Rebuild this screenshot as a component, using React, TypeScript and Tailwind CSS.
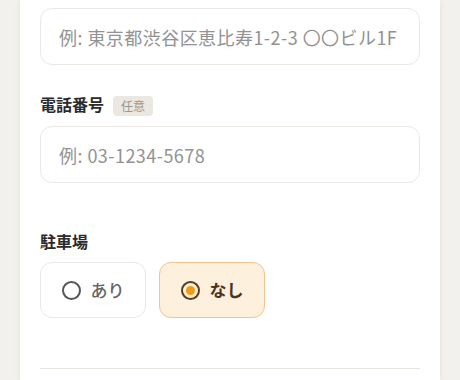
export default function App() {
  return (
    <div
      className="min-h-[380px] w-[460px] bg-[#f3f1ee] px-5"
      style={{ fontFamily: '"Noto Sans CJK JP", "Noto Sans", sans-serif' }}
    >
      <div className="min-h-[380px] bg-white px-5 pt-2 shadow-[0_0_6px_rgba(120,100,80,0.12)]">
        {/* 住所 */}
        <input
          type="text"
          placeholder="例: 東京都渋谷区恵比寿1-2-3 〇〇ビル1F"
          className="h-[57px] w-full rounded-xl border border-[#ebe8e4] bg-white px-[18px] text-[18px] tracking-wide text-[#333] outline-none placeholder:text-[#929292]"
        />

        {/* 電話番号 */}
        <div className="mt-[27px] flex h-6 items-center gap-[9px]">
          <span className="text-base font-bold text-[#2b2b2b]">電話番号</span>
          <span className="mt-[3px] rounded bg-[#ebe8e2] px-2 py-[1px] text-xs leading-[18px] text-[#9c978f]">任意</span>
        </div>
        <input
          type="text"
          placeholder="例: 03-1234-5678"
          className="mt-[10px] h-[57px] w-full rounded-xl border border-[#ebe8e4] bg-white px-[18px] text-[18px] tracking-wide text-[#333] outline-none placeholder:text-[#929292]"
        />

        {/* 駐車場 */}
        <div className="mt-[46px] h-6 text-base font-bold leading-6 text-[#2b2b2b]">駐車場</div>
        <div className="mt-[9px] flex gap-[13px]">
          <button className="flex h-14 w-[106px] items-center justify-center gap-[10px] rounded-xl border border-[#ebe8e4] bg-white">
            <span className="h-[19px] w-[19px] rounded-full border-[2.5px] border-[#555]" />
            <span className="text-[17px] font-medium text-[#666]">あり</span>
          </button>
          <button className="flex h-14 w-[106px] items-center justify-center gap-[10px] rounded-xl border border-[#efc48f] bg-[#fdf0dc]">
            <span className="flex h-[19px] w-[19px] items-center justify-center rounded-full border-[2.5px] border-[#5a3a1c]">
              <span className="h-[9px] w-[9px] rounded-full bg-[#f39a12]" />
            </span>
            <span className="text-[17px] font-bold text-[#4a3320]">なし</span>
          </button>
        </div>

        <div className="mt-[50px] h-px bg-[#e8e5e1]" />
      </div>
    </div>
  );
}
